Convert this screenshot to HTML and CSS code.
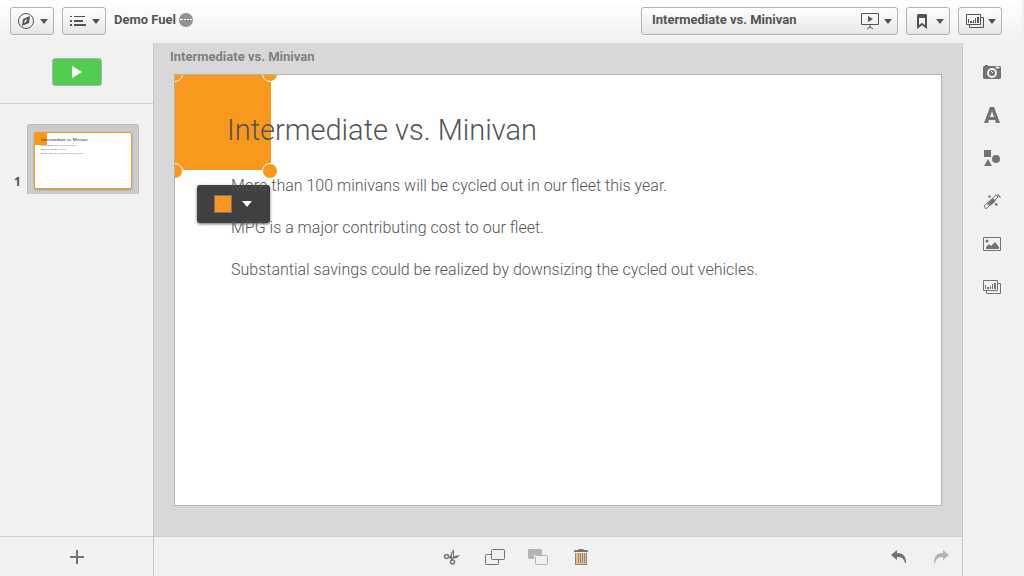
FILE: index.html
```html
<!DOCTYPE html>
<html lang="en">
<head>
<meta charset="utf-8">
<meta name="viewport" content="width=device-width, initial-scale=1">
<title>Intermediate vs. Minivan</title>
<link rel="stylesheet" href="styles.css">
</head>
<body>
<svg class="sprite" aria-hidden="true">
  <symbol id="charts" viewBox="0 0 20 16"><path d="M1.500 1.500h14v10h-14zM16 4.500h2.500v10h-14V12" fill="none" stroke="currentColor"/><path d="M3 6h1v4H3zM5 8h2v2H5zM8 7h1v3H8zM10 5h1v5h-1zM12 4h2v6h-2z" fill="currentColor"/></symbol>
</svg>
<div class="app">
  <header class="topbar">
    <button class="tool-button" type="button" aria-label="Navigation">
      <svg width="18" height="18" viewBox="0 0 18 18"><circle cx="9" cy="9" r="7.500" fill="none" stroke="currentColor"/><path d="M13 4l-1 7-7 3 1-7z" fill="currentColor"/><path d="M10 7l-1 3-2 1 1-3z" fill="#f4f4f4"/></svg>
      <span class="caret"></span>
    </button>
    <button class="tool-button" type="button" aria-label="Global menu">
      <svg width="18" height="18" viewBox="0 0 18 18"><path d="M1 4h2v1H1zM1 8h2v2H1zM1 12h2v2H1zM5 4h11v1H5zM5 8h9v2H5zM5 12h12v2H5z" fill="currentColor"/></svg>
      <span class="caret"></span>
    </button>
    <div class="app-name"><span>Demo Fuel</span>
      <svg width="14" height="14" viewBox="0 0 14 14"><circle cx="7" cy="7" r="7" fill="#929292"/><path d="M1 6h3v1H1zM5 6h2v1H5zM8 6h2v1H8zM11 6h2v1h-2z" fill="#fff"/></svg>
    </div>
    <button class="tool-button story-button" type="button">
      <span class="story-label">Intermediate vs. Minivan</span>
      <svg width="20" height="18" viewBox="0 0 20 18"><path d="M1.500 1.500h17v11h-17zM7 17l3-2 3 2M10 13v3" fill="none" stroke="currentColor"/><path d="M8 4l5 3-5 3z" fill="currentColor"/></svg>
      <span class="caret"></span>
    </button>
    <button class="tool-button" type="button" aria-label="Bookmarks">
      <svg width="18" height="18" viewBox="0 0 18 18"><path d="M5 5v10l4-3 4 3V5" fill="none" stroke="currentColor" stroke-width="2"/><path d="M4 3l1-1h8l1 1v3H4z" fill="currentColor"/></svg>
      <span class="caret"></span>
    </button>
    <button class="tool-button" type="button" aria-label="Sheets">
      <svg width="20" height="16"><use href="#charts"/></svg>
      <span class="caret"></span>
    </button>
  </header>
  <div class="workspace">
    <aside class="slides">
      <div class="play-area">
        <button class="play" type="button" aria-label="Play the story"><svg width="10" height="12" viewBox="0 0 10 12"><path d="M0 0l10 6-10 6z" fill="#fff"/></svg></button>
      </div>
      <ol class="slide-list">
        <li class="slide-item"><span class="slide-number">1</span>
          <a class="thumb-frame" href="#slide" aria-label="Slide 1">
            <span class="thumb"><span class="thumb-shape"></span>
              <span class="thumb-title">Intermediate vs. Minivan</span>
              <span class="thumb-text">More than 100 minivans will be cycled out in our fleet this year.</span>
              <span class="thumb-text">MPG is a major contributing cost to our fleet.</span>
              <span class="thumb-text">Substantial savings could be realized by downsizing the cycled out vehicles.</span>
            </span>
          </a>
        </li>
      </ol>
      <div class="add-bar"><button class="icon-button" type="button" aria-label="Add slide"><svg width="16" height="16" viewBox="0 0 16 16"><path d="M1 7h6V1h2v6h6v2H9v6H7V9H1z" fill="currentColor"/></svg></button></div>
    </aside>
    <main class="editor">
      <div class="stage">
        <h1 class="story-title">Intermediate vs. Minivan</h1>
        <section class="slide" id="slide">
          <div class="shape">
            <span class="handle handle-nw"></span><span class="handle handle-ne"></span><span class="handle handle-sw"></span><span class="handle handle-se"></span>
          </div>
          <button class="color-menu" type="button" aria-label="Shape color"><span class="swatch"></span><span class="caret"></span></button>
          <div class="slide-copy">
            <h2 class="slide-title">Intermediate vs. Minivan</h2>
            <p>More than 100 minivans will be cycled out in our fleet this year.</p>
            <p>MPG is a major contributing cost to our fleet.</p>
            <p>Substantial savings could be realized by downsizing the cycled out vehicles.</p>
          </div>
        </section>
      </div>
      <div class="edit-bar">
        <div class="edit-tools">
          <button class="icon-button" type="button" aria-label="Cut"><svg width="18" height="18" viewBox="0 0 18 18"><g fill="none" stroke="currentColor" stroke-width="1.500"><circle cx="3.500" cy="8.500" r="2"/><circle cx="9.500" cy="14" r="2"/><path d="M5.500 9l3 1M9 12l-1-3"/></g><path d="M7 9l1-4 3-4v7l6-1-3 3-6 1z" fill="currentColor"/><path d="M10 4v5l-1 1V6z" fill="#f1f1f1"/></svg></button>
          <button class="icon-button" type="button" aria-label="Copy"><svg width="20" height="16" viewBox="0 0 20 16"><path d="M7.500.500h11a1 1 0 011 1v8a1 1 0 01-1 1h-11a1 1 0 01-1-1v-8a1 1 0 011-1zM6 5.500H1.500a1 1 0 00-1 1v8a1 1 0 001 1h11a1 1 0 001-1V11" fill="none" stroke="currentColor"/></svg></button>
          <button class="icon-button" type="button" aria-label="Paste" disabled><svg width="20" height="16" viewBox="0 0 20 16"><path d="M1 0h12l1 1v5H6v4H1L0 9V1z" fill="currentColor"/><rect x="7.500" y="6.500" width="12" height="9" rx="1" fill="#f1f1f1" stroke="currentColor"/></svg></button>
          <button class="icon-button" type="button" aria-label="Delete"><svg width="14" height="18" viewBox="0 0 14 18"><path d="M0 4V3l1-1h3l1-1h4l1 1h3l1 1v1z" fill="currentColor"/><path d="M1 5h12v12H1z" fill="#eebf8a"/><path d="M1 5h1v11h10V5h1v12H1zM4 5h1v10H4zM6 5h1v10H6zM8 5h1v10H8zM10 5h1v10h-1z" fill="#8c8580"/></svg></button>
        </div>
        <div class="history">
          <button class="icon-button" type="button" aria-label="Undo"><svg width="16" height="14" viewBox="0 0 16 14"><path d="M0 5l6-5v3c6 0 9 3 9 10h-1c-1-4-3-6-8-6v3z" fill="currentColor"/></svg></button>
          <button class="icon-button" type="button" aria-label="Redo" disabled><svg width="16" height="14" viewBox="0 0 16 14"><path d="M16 5l-6-5v3C4 3 1 6 1 13h1c1-4 3-6 8-6v3z" fill="currentColor"/></svg></button>
        </div>
      </div>
    </main>
    <nav class="rail" aria-label="Story tools">
      <button class="icon-button" type="button" aria-label="Snapshot library"><svg width="20" height="16" viewBox="0 0 20 16"><path d="M2 2h1V1h3v1h12l1 1v11l-1 1H2l-1-1V3z" fill="currentColor"/><circle cx="10" cy="9" r="4" fill="none" stroke="#f1f1f1" stroke-width="2"/><path d="M9 7l2 2M14 3h3v1h-3z" stroke="#f1f1f1" fill="#f1f1f1"/></svg></button>
      <button class="icon-button" type="button" aria-label="Text objects"><svg width="18" height="18" viewBox="0 0 18 18"><path d="M7 1h4l6 16h-4l-1-3H6l-1 3H1zM9 5l-2 6h4z" fill="currentColor" fill-rule="evenodd"/></svg></button>
      <button class="icon-button" type="button" aria-label="Shapes"><svg width="18" height="18" viewBox="0 0 18 18"><path d="M1 1h7v7H1zM5 10l4 7H1z" fill="currentColor"/><circle cx="13" cy="10" r="4" fill="currentColor"/></svg></button>
      <button class="icon-button" type="button" aria-label="Effects"><svg width="20" height="18" viewBox="0 0 20 18"><path d="M2 14L14 3l2 2L4 17z" fill="none" stroke="currentColor"/><path d="M5 12l6-6 3 3-6 5z" fill="currentColor"/><path d="M7 3l2 1-1 2-2-1zM16 2l3 3-1 1-3-3zM13 11l3 1-1 2-2-1z" fill="currentColor"/></svg></button>
      <button class="icon-button" type="button" aria-label="Media objects"><svg width="20" height="16" viewBox="0 0 20 16"><path d="M1.500 1.500h17v13h-17z" fill="none" stroke="currentColor"/><path d="M4 13v-2l3-3 2 2 4-4 4 5v2z" fill="currentColor"/><circle cx="5" cy="5" r="1.500" fill="currentColor"/></svg></button>
      <button class="icon-button" type="button" aria-label="Sheet library"><svg width="20" height="16"><use href="#charts"/></svg></button>
    </nav>
  </div>
</div>
</body>
</html>
```
FILE: styles.css
```css
* { box-sizing: border-box; }
body { margin: 0; font-family: Roboto, "Noto Sans", sans-serif; color: #545454; background: #f1f1f1; }
button { font: inherit; color: inherit; padding: 0; border: 0; background: none; }
svg { display: block; flex: none; }
.sprite { position: absolute; width: 0; height: 0; }
.app { display: flex; flex-direction: column; min-height: 100vh; }
.topbar { display: flex; align-items: center; gap: 8px; height: 43px; margin-right: 2px; padding: 0 20px 1px 10px; background: linear-gradient(#fff, #f1f1f1); }
.tool-button { display: flex; align-items: center; justify-content: space-between; width: 44px; height: 28px; padding: 0 5px 0 6px; border: 1px solid #b3b3b3; border-radius: 3px; background: linear-gradient(#fff, #e6e6e6); }
.caret { flex: none; border: 4px solid transparent; border-top: 5px solid currentColor; border-bottom: 0; }
.app-name { display: flex; align-items: center; gap: 3px; margin-right: auto; font-size: 13px; line-height: 14px; font-weight: 700; padding-bottom: 2px; }
.story-button { width: 257px; padding-left: 10px; gap: 4px; }
.story-label { flex: 1; text-align: left; font-size: 13px; font-weight: 700; line-height: 14px; padding-bottom: 2px; }
.workspace { flex: 1; display: flex; }
.slides { display: flex; flex-direction: column; width: 154px; border-right: 1px solid #c8c8c8; }
.play-area { display: flex; justify-content: center; padding: 15px 0 17px; border-bottom: 1px solid #ccc; }
.play { display: flex; align-items: center; justify-content: center; width: 50px; height: 28px; border: 1px solid #b3b3b3; border-radius: 3px; background: #52cc52; }
.slide-list { flex: 1; margin: 0; padding: 20px 14px; list-style: none; }
.slide-item { display: flex; align-items: flex-end; }
.slide-number { width: 13px; padding-bottom: 4px; font-family: "Noto Sans", sans-serif; font-size: 12px; line-height: 16px; font-weight: 700; }
.thumb-frame { flex: 1; padding: 7px 6px 5px; border: 1px solid #bebebe; border-bottom: 0; border-radius: 3px 3px 0 0; background: #cbcbcb; color: inherit; text-decoration: none; }
.thumb { position: relative; display: block; height: 57px; padding: 3px 0 0 6px; border: 1px solid #f8981d; border-radius: 2px; background: #fff; box-shadow: 0 1px 2px #999; overflow: hidden; white-space: nowrap; }
.thumb-shape { position: absolute; top: 0; left: 0; width: 12px; height: 12px; background: #f8981d; }
.thumb-title, .thumb-text { position: relative; display: block; }
.thumb-title { font-family: "Noto Sans", sans-serif; font-size: 4px; line-height: 8px; color: #222; }
.thumb-text { font-family: "DejaVu Sans", sans-serif; font-size: 1px; line-height: 4px; font-weight: 700; color: #000; }
.add-bar { display: flex; align-items: center; justify-content: center; height: 40px; border-top: 1px solid #ccc; }
.icon-button { display: flex; align-items: center; justify-content: center; width: 20px; height: 20px; color: #737373; }
.icon-button:disabled { color: #b3b3b3; }
.editor { flex: 1; display: flex; flex-direction: column; min-width: 0; }
.stage { flex: 1; display: flex; flex-direction: column; padding: 4px 20px 30px; background: #d8d8d8; }
.story-title { margin: 0 0 7px; text-indent: -4px; color: #808080; font-size: 13px; line-height: 20px; font-weight: 700; }
.slide { position: relative; flex: 1; border: 1px solid #b3b3b3; background: #fff; overflow: hidden; }
.shape { position: absolute; top: 0; left: 0; width: 96px; height: 95px; background: #f8981d; }
.handle { position: absolute; width: 16px; height: 16px; border: 1px solid #fff; border-radius: 50%; background: #f8981d; }
.handle-nw { top: -9px; left: -8px; }
.handle-ne { top: -9px; right: -7px; }
.handle-sw { bottom: -9px; left: -8px; }
.handle-se { bottom: -9px; right: -7px; }
.color-menu { position: absolute; top: 110px; left: 22px; display: flex; align-items: center; gap: 10px; width: 73px; height: 38px; padding-left: 17px; border-radius: 3px; background: #404040; color: #fff; box-shadow: 0 1px 3px #666; }
.color-menu .caret { border-width: 6px 5px 0; }
.swatch { width: 18px; height: 18px; border: 1px solid #737373; background: #f8981d; }
.slide-copy { position: relative; padding: 35px 20px 20px 56px; pointer-events: none; }
.slide-title { margin: 0 0 24px -4px; font-size: 29px; line-height: 40px; font-weight: 300; }
.slide-copy p { margin: 0 0 18px; font-size: 16px; line-height: 24px; font-weight: 300; }
.edit-bar { display: flex; align-items: center; height: 40px; border-top: 1px solid #ccc; padding: 0 11px; }
.edit-tools { display: flex; flex: 1; justify-content: center; gap: 23px; padding-right: 22px; }
.history { display: flex; gap: 22px; }
.rail { display: flex; flex-direction: column; align-items: center; gap: 23px; width: 62px; padding-top: 19px; padding-right: 3px; border-left: 1px solid #c8c8c8; }
```
